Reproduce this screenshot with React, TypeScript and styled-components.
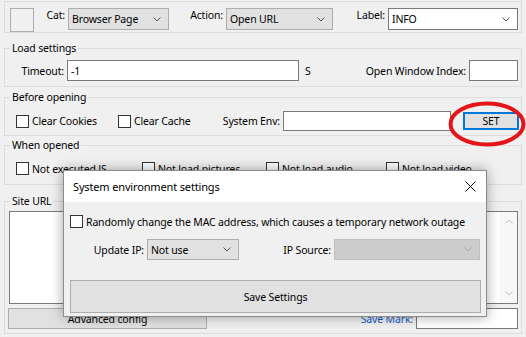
import React from 'react';
import styled, { createGlobalStyle } from 'styled-components';

const GlobalStyle = createGlobalStyle`
  html, body {
    margin: 0;
    padding: 0;
    background: #f0f0f0;
  }
`;

const Window = styled.div`
  position: relative;
  width: 526px;
  height: 337px;
  overflow: hidden;
  box-sizing: border-box;
  padding: 1px 4px 0 4px;
  background: #f0f0f0;
  display: flex;
  flex-direction: column;
  font-family: "Noto Sans", "Liberation Sans", sans-serif;
  font-size: 10.5px;
  letter-spacing: -0.15px;
  color: #000;

  * {
    box-sizing: border-box;
  }
`;

const TopPanel = styled.div`
  height: 32px;
  border: 1px solid #dcdcdc;
  display: flex;
  align-items: flex-start;
  padding: 6px 0 0 5px;
`;

const Swatch = styled.div`
  width: 24px;
  height: 24px;
  border: 1px solid #adadad;
  background: #f0f0f0;
`;

const Group = styled.div<{ $mt: number; $h: number }>`
  margin-top: ${p => p.$mt}px;
  height: ${p => p.$h}px;
  border: 1px solid #dcdcdc;
  display: flex;
  flex-direction: column;
`;

const Legend = styled.div`
  align-self: flex-start;
  margin: -8px 0 0 5px;
  padding: 0 2px;
  height: 14px;
  line-height: 14px;
  background: #f0f0f0;
`;

const Row = styled.div<{ $mt: number; $h: number }>`
  margin-top: ${p => p.$mt}px;
  height: ${p => p.$h}px;
  display: flex;
  align-items: center;
`;

const FieldLabel = styled.div<{ $w: number }>`
  width: ${p => p.$w}px;
  flex: none;
  text-align: right;
  padding-right: 3px;
  white-space: nowrap;
`;

const Spacer = styled.div`
  flex: 1;
`;

const Combo = styled.div<{ $w: number; $h?: number; $tone: 'gray' | 'white' | 'off' }>`
  width: ${p => p.$w}px;
  height: ${p => p.$h ?? 22}px;
  flex: none;
  display: flex;
  align-items: center;
  justify-content: space-between;
  padding: 0 7px 0 3px;
  white-space: nowrap;
  background: ${p => (p.$tone === 'white' ? '#ffffff' : p.$tone === 'off' ? '#cccccc' : '#e1e1e1')};
  border: 1px solid ${p => (p.$tone === 'white' ? '#7a7a7a' : p.$tone === 'off' ? '#bfbfbf' : '#adadad')};
`;

const TextBox = styled.div<{ $w: number; $h?: number }>`
  width: ${p => p.$w}px;
  height: ${p => p.$h ?? 21}px;
  flex: none;
  display: flex;
  align-items: center;
  padding-left: 3px;
  background: #fff;
  border: 1px solid #7a7a7a;
`;

const Unit = styled.span`
  margin-left: 6px;
`;

const CheckItem = styled.label<{ $w?: number; $ml?: number }>`
  width: ${p => (p.$w ? `${p.$w}px` : 'auto')};
  margin-left: ${p => p.$ml ?? 0}px;
  flex: none;
  display: flex;
  align-items: center;
  white-space: nowrap;
`;

const Box = styled.span`
  width: 13px;
  height: 13px;
  flex: none;
  margin-right: 3px;
  background: #fff;
  border: 1px solid #333;
`;

const Button = styled.div<{ $w: number; $h: number; $focus?: boolean }>`
  width: ${p => p.$w}px;
  height: ${p => p.$h}px;
  flex: none;
  display: flex;
  align-items: center;
  justify-content: center;
  background: #e1e1e1;
  border: ${p => (p.$focus ? '2px solid #0078d7' : '1px solid #adadad')};
`;

const UrlBox = styled.div`
  margin: 3px 3px 0 4px;
  height: 93px;
  display: flex;
  background: #fff;
  border: 1px solid #7a7a7a;
`;

const UrlText = styled.div`
  flex: 1;
`;

const ScrollBar = styled.div`
  width: 17px;
  display: flex;
  flex-direction: column;
  justify-content: space-between;
  align-items: center;
  padding: 7px 0 7px;
  background: #f7f7f7;
`;

const LinkLabel = styled.span`
  color: #1a5fc8;
  margin-right: 3px;
`;

const Ring = styled.svg`
  position: absolute;
  left: 448px;
  top: 101px;
`;

const Dialog = styled.div`
  position: absolute;
  left: 63px;
  top: 170px;
  width: 424px;
  height: 147px;
  display: flex;
  flex-direction: column;
  background: #f0f0f0;
  border: 1px solid #8c8c8c;
  box-shadow: 0 0 12px rgba(0, 0, 0, 0.35);
`;

const TitleBar = styled.div`
  height: 31px;
  flex: none;
  display: flex;
  align-items: center;
  justify-content: space-between;
  padding: 0 10px 0 9px;
  background: #fff;
  font-size: 11px;
`;

const DialogBody = styled.div`
  flex: 1;
  display: flex;
  flex-direction: column;
  padding: 0 5px 3px 6px;
`;

const SaveButton = styled.div`
  margin-top: auto;
  height: 33px;
  display: flex;
  align-items: center;
  justify-content: center;
  background: #e1e1e1;
  border: 1px solid #adadad;
`;

const Chevron: React.FC<{ color?: string }> = ({ color = '#555' }) => (
  <svg width="8" height="5" viewBox="0 0 8 5">
    <path d="M0.5 0.5 L4 4 L7.5 0.5" fill="none" stroke={color} strokeWidth="1" />
  </svg>
);

const ArrowUp = () => (
  <svg width="8" height="5" viewBox="0 0 8 5">
    <path d="M0.5 4.5 L4 1 L7.5 4.5" fill="none" stroke="#c2c2c2" strokeWidth="1" />
  </svg>
);

const CloseIcon = () => (
  <svg width="11" height="11" viewBox="0 0 11 11">
    <path d="M0.5 0.5 L10.5 10.5 M10.5 0.5 L0.5 10.5" stroke="#000" strokeWidth="1" />
  </svg>
);

const App: React.FC = () => {
  return (
    <Window>
      <GlobalStyle />
      <TopPanel>
        <Swatch />
        <FieldLabel $w={34}>Cat:</FieldLabel>
        <Combo $w={101} $tone="gray">Browser Page<Chevron /></Combo>
        <FieldLabel $w={57}>Action:</FieldLabel>
        <Combo $w={107} $tone="gray">Open URL<Chevron /></Combo>
        <FieldLabel $w={55}>Label:</FieldLabel>
        <Combo $w={130} $tone="white">INFO<Chevron /></Combo>
      </TopPanel>

      <Group $mt={15} $h={39}>
        <Legend>Load settings</Legend>
        <Row $mt={5} $h={21}>
          <FieldLabel $w={62}>Timeout:</FieldLabel>
          <TextBox $w={232}>-1</TextBox>
          <Unit>S</Unit>
          <Spacer />
          <FieldLabel $w={120}>Open Window Index:</FieldLabel>
          <TextBox $w={49} $h={21} style={{ marginRight: 3 }} />
        </Row>
      </Group>

      <Group $mt={10} $h={39}>
        <Legend>Before opening</Legend>
        <Row $mt={7} $h={20}>
          <CheckItem $w={102} $ml={11}><Box />Clear Cookies</CheckItem>
          <CheckItem $w={100}><Box />Clear Cache</CheckItem>
          <FieldLabel $w={65}>System Env:</FieldLabel>
          <TextBox $w={168} $h={20} />
          <Button $w={56} $h={18} $focus style={{ marginLeft: 12 }}>SET</Button>
        </Row>
      </Group>

      <Group $mt={9} $h={40}>
        <Legend>When opened</Legend>
        <Row $mt={9} $h={15}>
          <CheckItem $w={126} $ml={11}><Box />Not executed JS</CheckItem>
          <CheckItem $w={124}><Box />Not load pictures</CheckItem>
          <CheckItem $w={120}><Box />Not load audio</CheckItem>
          <CheckItem><Box />Not load video</CheckItem>
        </Row>
      </Group>

      <Group $mt={16} $h={133}>
        <Legend>Site URL</Legend>
        <UrlBox>
          <UrlText />
          <ScrollBar>
            <ArrowUp />
            <Chevron color="#c2c2c2" />
          </ScrollBar>
        </UrlBox>
        <Row $mt={4} $h={21}>
          <Button $w={199} $h={21} style={{ marginLeft: 3 }}>Advanced config</Button>
          <Spacer />
          <LinkLabel>Save Mark:</LinkLabel>
          <TextBox $w={102} $h={21} style={{ marginRight: 3 }} />
        </Row>
      </Group>

      <Ring width="78" height="46" viewBox="0 0 78 46">
        <ellipse cx="39" cy="23" rx="36.5" ry="20.5" fill="none" stroke="#e3151a" strokeWidth="4" />
      </Ring>

      <Dialog>
        <TitleBar>
          <span>System environment settings</span>
          <CloseIcon />
        </TitleBar>
        <DialogBody>
          <Row $mt={12} $h={15}>
            <CheckItem><Box />Randomly change the MAC address, which causes a temporary network outage</CheckItem>
          </Row>
          <Row $mt={10} $h={21}>
            <FieldLabel $w={77}>Update IP:</FieldLabel>
            <Combo $w={92} $h={21} $tone="gray">Not use<Chevron /></Combo>
            <FieldLabel $w={95}>IP Source:</FieldLabel>
            <Combo $w={146} $h={21} $tone="off"><span /><Chevron color="#a8a8a8" /></Combo>
          </Row>
          <SaveButton>Save Settings</SaveButton>
        </DialogBody>
      </Dialog>
    </Window>
  );
};

export default App;
